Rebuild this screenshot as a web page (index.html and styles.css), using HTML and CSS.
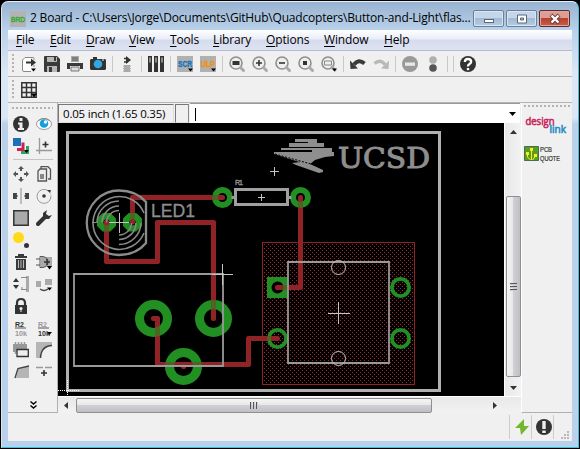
FILE: index.html
```html
<!DOCTYPE html>
<html lang="en">
<head>
<meta charset="utf-8">
<title>2 Board</title>
<link rel="stylesheet" href="styles.css">
</head>
<body>
<div class="window">
  <header class="titlebar">
    <svg class="app-icon" width="16" height="16"><rect width="16" height="16" fill="#b3b3b3"/><text x="1" y="11" class="px" font-size="8" fill="#39a935" stroke="#39a935" stroke-width=".5" textLength="14" lengthAdjust="spacingAndGlyphs">BRD</text></svg>
    <h1 class="title">2 Board - C:\Users\Jorge\Documents\GitHub\Quadcopters\Button-and-Light\flas...</h1>
    <div class="controls">
      <button class="ctl"><svg width="12" height="10"><rect x="1.500" y="5.500" width="9" height="3" fill="#fff" stroke="#5b6678"/></svg></button>
      <button class="ctl"><svg width="12" height="10"><path d="M1.500 1h9v8h-9z" fill="#fff" stroke="#5b6678"/><path d="M4.500 4h3v2h-3z" fill="#a9c0dc" stroke="#5b6678"/></svg></button>
      <button class="ctl close"><svg width="12" height="10"><path d="M2 1l8 8M10 1l-8 8" stroke="#6b3a3a" stroke-width="4"/><path d="M2.500 1.500l7 7M9.500 1.500l-7 7" stroke="#fff" stroke-width="2.400"/></svg></button>
    </div>
  </header>

  <div class="client">
    <nav class="menu">
      <span><u>F</u>ile</span><span><u>E</u>dit</span><span><u>D</u>raw</span><span><u>V</u>iew</span><span><u>T</u>ools</span><span><u>L</u>ibrary</span><span><u>O</u>ptions</span><span><u>W</u>indow</span><span><u>H</u>elp</span>
    </nav>

    <div class="toolbar">
      <i class="grip"></i>
      <b><svg viewBox="0 0 16 16"><path d="M13 4V2.500Q13 1.500 12 1.500H4L1.500 4v10q0 1.500 1.500 1.500h7M13 9v2" fill="#fff" stroke="#888"/><path d="M5 6.500h8" stroke="#333" stroke-width="2"/><path d="M10 2.500l5 4-5 4z" fill="#333"/><path d="M10 12.500h5l-2.500 3z"/></svg></b>
      <b><svg viewBox="0 0 16 16"><path d="M0 1q0-1 1-1h12l3 3v12q0 1-1 1H1q-1 0-1-1z" fill="#3a3a3a"/><path d="M3 1h10v5H3zM3 10h10v6H3z" fill="#b8b8b8"/><path d="M10 1h2v4h-2zM5 11h3v5H5z" fill="#3a3a3a"/></svg></b>
      <b><svg viewBox="0 0 16 16"><path d="M4 0h8v6H4z" fill="#aaa"/><path d="M5 2h6M5 4h6" stroke="#555"/><path d="M0 7h16v6h-3v-3H3v3H0z" fill="#3a3a3a"/><path d="M4 11h8v4H4z" fill="#ddd" stroke="#777"/></svg></b>
      <b><svg viewBox="0 0 16 16"><path d="M1 3h2V1h4v2h8l1 1v9l-1 1H1l-1-1V4z" fill="#333"/><circle cx="8" cy="8" r="4.300" fill="#32a8e0"/><path d="M12 4h2" stroke="#eee"/></svg></b>
      <s></s>
      <b><svg viewBox="0 0 16 16"><path d="M5 2.500h4M5 6h4" stroke="#333" stroke-width="1.500"/><path d="M7 0l5 4-5 4z" fill="#333"/><path d="M5 9h6v7H5z" fill="#aaa"/><path d="M4 10h8M4 12.500h8M4 15h8" stroke="#aaa"/></svg></b>
      <s></s>
      <b><svg viewBox="0 0 16 16"><path d="M0 0h4v16H0zM6 0h4v16H6zM12 0h4v16h-4z" fill="#333"/><path d="M1.500 1.500h1v5h-1zM7.500 1.500h1v5h-1zM13.500 1.500h1v5h-1z" fill="#ddd"/></svg></b>
      <s></s>
      <b><svg viewBox="0 0 16 16"><path d="M0 0h16v16H0z" fill="#b0b0b0"/><text class="px" x="1" y="11" font-size="8.500" fill="#1675b8" stroke="#1675b8" stroke-width=".4" textLength="14" lengthAdjust="spacingAndGlyphs">SCR</text><path d="M11 12.500h5l-2.500 3z"/></svg></b>
      <b><svg viewBox="0 0 16 16"><path d="M0 0h16v16H0z" fill="#b0b0b0"/><text class="px" x="1" y="11" font-size="8.500" fill="#ef9310" stroke="#ef9310" stroke-width=".4" textLength="14" lengthAdjust="spacingAndGlyphs">ULP</text><path d="M11 12.500h5l-2.500 3z"/></svg></b>
      <s></s>
      <b><svg viewBox="0 0 16 16"><circle cx="7" cy="7" r="6" class="lens"/><path d="M11.500 11.500l3 3" class="handle"/><path d="M3.500 5h7v4h-7z" fill="#333"/></svg></b>
      <b><svg viewBox="0 0 16 16"><circle cx="7" cy="7" r="6" class="lens"/><path d="M11.500 11.500l3 3" class="handle"/><path d="M4 7h6M7 4v6" stroke="#333" stroke-width="1.600"/></svg></b>
      <b><svg viewBox="0 0 16 16"><circle cx="7" cy="7" r="6" class="lens"/><path d="M11.500 11.500l3 3" class="handle"/><path d="M4 7h6" stroke="#333" stroke-width="1.600"/></svg></b>
      <b><svg viewBox="0 0 16 16"><circle cx="7" cy="7" r="6" class="lens"/><path d="M11.500 11.500l3 3" class="handle"/><path d="M5 5h4v4H5z" fill="#333"/></svg></b>
      <b><svg viewBox="0 0 16 16"><circle cx="7" cy="7" r="6" class="lens"/><path d="M11 11l3 3" class="handle"/><path d="M3.500 5h7v4h-7z" fill="none" stroke="#888"/><path d="M11 12.500h5l-2.500 3z"/></svg></b>
      <s></s>
      <b><svg viewBox="0 0 16 16"><path d="M4 8.500Q8.500 2.500 14.500 7.500" fill="none" stroke="#3a3a3a" stroke-width="4"/><path d="M0 4.500l8 8-7.500.5z" fill="#3a3a3a"/></svg></b>
      <b><svg viewBox="0 0 16 16"><path d="M12 8.500Q7.500 2.500 1.500 7.500" fill="none" stroke="#b8b8b8" stroke-width="3.500"/><path d="M16 4.500l-8 8 7.500.5z" fill="#b8b8b8"/></svg></b>
      <s></s>
      <b><svg viewBox="0 0 16 16"><circle cx="8" cy="8" r="8" fill="#999"/><path d="M3 6.500h10v3.300H3z" fill="#e8e8e8"/></svg></b>
      <b><svg viewBox="0 0 16 16"><circle cx="8" cy="4" r="3.800" fill="#b0b0b0"/><circle cx="8" cy="12" r="3.800" fill="#555"/></svg></b>
      <s></s><s></s>
      <b><svg viewBox="0 0 16 16"><circle cx="8" cy="8" r="8" fill="#333"/><path d="M4.800 6Q5 3 8 3t3.200 2.600Q11.200 7 9.500 8T8 10.500" fill="none" stroke="#fff" stroke-width="2.300"/><path d="M6.800 12h2.400v2.200H6.800z" fill="#fff"/></svg></b>
    </div>

    <div class="toolbar">
      <i class="grip"></i>
      <b><svg viewBox="0 0 16 16"><path d="M.8.8h14.400v14.400H.8zM5.500 0v16M10.500 0v16M0 5.500h16M0 10.500h16" fill="none" stroke="#333" stroke-width="1.500"/><path d="M10 11.500h6l-3 4z"/></svg></b>
    </div>

    <main class="work">
      <aside class="tools">
        <i class="hgrip"></i>
        <div class="palette">
          <b><svg viewBox="0 0 16 16"><circle cx="8" cy="8" r="8" fill="#333"/><path d="M6.500 2h3v3h-3zM5 6.500h4.500V12H11v2H5v-2h1.500V8.500H5z" fill="#eee"/></svg></b>
          <b><svg viewBox="0 0 16 16"><ellipse cx="8" cy="8" rx="7.500" ry="5.500" fill="#fff" stroke="#999"/><path d="M2 5q6-5 12 0" fill="none" stroke="#888"/><circle cx="8" cy="7.500" r="4.300" fill="#129fe2"/><circle cx="9.500" cy="6" r="1.700" fill="#fff"/></svg></b>
          <b><svg viewBox="0 0 16 16"><path d="M0 0h8v8H0z" fill="#1d70b7"/><path d="M10 4.500v7H4" fill="none" stroke="#d81a55" stroke-width="3"/><path d="M14.500 8v6.500H8" fill="none" stroke="#2ba562" stroke-width="3"/><path d="M11 12h5l-2.500 3z"/></svg></b>
          <b><svg viewBox="0 0 16 16"><path d="M3.500 0v16M0 12.500h16" stroke="#999" stroke-width="1.300"/><path d="M6.500 6.500h6M9.500 3.500v6" stroke="#333" stroke-width="1.600"/></svg></b>
        </div>
        <hr>
        <div class="palette">
          <b><svg viewBox="0 0 16 16"><path d="M8 0l3 3H9v2H7V3H5zM8 16l3-3H9v-2H7v2H5zM0 8l3-3v2h2v2H3v2zM16 8l-3-3v2h-2v2h2v2z" fill="#555"/></svg></b>
          <b><svg viewBox="0 0 16 16"><path d="M5 3V.7h7l2.500 2.500V13H12" fill="#eee" stroke="#555" stroke-width="1.300"/><path d="M2 5l2-2h6.500v12H2z" fill="#eee" stroke="#555" stroke-width="1.300"/><path d="M4 8h4v5H4z" fill="#888"/></svg></b>
          <b><svg viewBox="0 0 16 16"><path d="M8 0v16" stroke="#888"/><path d="M0 5h4v1.500H3v3h1V11H0zM16 5h-4v1.500h1v3h-1V11h4z" fill="#444"/><path d="M3 6l2 2-2 2zM13 6l-2 2 2 2z" fill="#444"/></svg></b>
          <b><svg viewBox="0 0 16 16"><path d="M12.500 3A7 7 0 1 0 15 8" fill="none" stroke="#999"/><path d="M13 3A7 7 0 0 1 15 8" fill="none" stroke="#ccc"/><circle cx="8" cy="8" r="1.800" fill="#333"/><path d="M11 2h4l-1 3z" fill="#333"/></svg></b>
          <b><svg viewBox="0 0 16 16"><path d="M.8.8h14.400v14.400H.8z" fill="#aaa" stroke="#333" stroke-width="1.500"/></svg></b>
          <b><svg viewBox="0 0 16 16"><path d="M2 14l7-7" stroke="#333" stroke-width="4" stroke-linecap="round"/><path d="M11 0l-4 3v4l2 2h4l3-4-3 1-3-2z" fill="#333"/></svg></b>
          <b><svg viewBox="0 0 16 16"><circle cx="5.500" cy="5.500" r="5.500" fill="#ffda16"/><circle cx="13.500" cy="13.500" r="2.500" fill="#333"/></svg></b>
          <b></b>
          <b><svg viewBox="0 0 16 16"><path d="M2 2h3V0h6v2h3v2H2zM3 5h10v11H3z" fill="#3a3a3a"/><path d="M5.500 6v8M8 6v8M10.500 6v8" stroke="#bbb"/></svg></b>
          <b><svg viewBox="0 0 16 16"><path d="M5 3h11v10H5z" fill="#aaa"/><path d="M4 2.500h3q5 1 5 5.500t-5 5.500H4zM0 5h4M0 11h4" fill="none" stroke="#555"/><path d="M8 8h6M11 5v6" stroke="#333" stroke-width="1.500"/><path d="M11 12h5l-2.500 3.500z"/></svg></b>
          <b><svg viewBox="0 0 16 16"><path d="M3 2l3 4H0zM3 13L0 9h6z" fill="#333"/><path d="M13 0h3v16h-3z" fill="#aaa"/><path d="M8 1.500h6M8 13.500h6M9 13V11" stroke="#888" fill="none"/></svg></b>
          <b><svg viewBox="0 0 16 16"><path d="M0 5h5v6H0zM9 3h7v6H9z" fill="#aaa"/><path d="M4 13q4 3 8 0" fill="none" stroke="#444" stroke-width="1.400"/><path d="M11 11.500h5l-2.500 3z"/></svg></b>
          <b><svg viewBox="0 0 16 16"><path d="M4 8V5q0-4 4-4t4 4v3" fill="none" stroke="#333" stroke-width="2.200"/><path d="M2 7h12v9H2z" fill="#333"/><circle cx="8" cy="10.500" r="1.500" fill="#eee"/><path d="M8 11v3" stroke="#eee"/></svg></b>
          <b></b>
          <b><svg viewBox="0 0 16 16"><text class="px" x="2" y="6.500" font-size="8" fill="#333" textLength="9" lengthAdjust="spacingAndGlyphs">R2</text><path d="M2 8h11" stroke="#555"/><text class="px" x="2" y="16" font-size="8" fill="#999" textLength="12" lengthAdjust="spacingAndGlyphs">10k</text></svg></b>
          <b><svg viewBox="0 0 16 16"><text class="px" x="2" y="6.500" font-size="8" fill="#999" textLength="9" lengthAdjust="spacingAndGlyphs">R2</text><path d="M2 8h11" stroke="#555"/><text class="px" x="2" y="16" font-size="8" fill="#333" textLength="12" lengthAdjust="spacingAndGlyphs">10k</text><path d="M11 12h5l-2.500 3z"/></svg></b>
          <b><svg viewBox="0 0 16 16"><path d="M0 2h14v8H0z" fill="#999"/><path d="M2.500 0v12M5.500 0v12M8.500 0v12M11.500 0v12" stroke="#999" stroke-width="1.500"/><path d="M4 7.500h11.300v7H4z" fill="#eee" stroke="#333" stroke-width="1.300"/></svg></b>
          <b><svg viewBox="0 0 16 16"><path d="M0 0h16v3Q5 4 4 16H0z" fill="#b5b5b5"/><path d="M4.500 16Q5 4 16 3.500" fill="none" stroke="#444" stroke-width="1.500"/></svg></b>
          <b><svg viewBox="0 0 16 16"><path d="M3 14L5.500 5 16 2v12z" fill="#b5b5b5"/><path d="M2 14L5 4.500 16 2" fill="none" stroke="#444" stroke-width="1.400"/></svg></b>
          <b><svg viewBox="0 0 16 16"><path d="M0 3.500h7M9 3.500h7" stroke="#999" stroke-width="1.300"/><path d="M5 9h6M8 6v6" stroke="#333" stroke-width="1.600"/></svg></b>
        </div>
        <svg class="more" width="7" height="8" viewBox="0 0 7 8"><path d="M.5.500l3 2.500 3-2.500M.5 4.500l3 2.500 3-2.500" fill="none" stroke="#000" stroke-width="1.400"/></svg>
      </aside>

      <section class="center">
        <div class="cmdline">
          <div class="coords">0.05 inch (1.65 0.35)</div>
          <div class="mini"></div>
          <div class="entry"><i class="caret"></i><svg width="8" height="4"><path d="M0 0h7l-3.500 4z"/></svg></div>
        </div>
        <div class="view">
          <svg class="board" viewBox="58 123 446 273" width="446" height="273">
            <defs>
              <pattern id="hatch" width="4" height="4" patternUnits="userSpaceOnUse"><path d="M0 0h1v1H0zM2 2h1v1H2z" fill="#a4282b" shape-rendering="crispEdges"/></pattern>
              <g id="traces" fill="none" stroke="#8f2426" stroke-width="5" stroke-linecap="round" stroke-linejoin="round">
                <path d="M132.500 222V197.500H222.500M106.500 222V261.500H157.500V222.500H213.500V318.500M300.500 197.500V287.500H277.500M153.500 318.500H157.500V364.500H248.500V338.500H277.500M183.500 366.500h.1"/>
              </g>
            </defs>
            <rect x="58" y="123" width="446" height="273" fill="#000"/>
            <rect x="262.500" y="242.500" width="152" height="142" fill="url(#hatch)" stroke="#8f2426"/>
            <circle cx="277.500" cy="287.500" r="6" fill="#000"/>
            <use href="#traces"/>
            <g fill="none" stroke="#228f22">
              <path d="M102.700 213.500h7.600l5.200 5v7.500l-5.200 5h-7.600l-5.200-5v-7.500zM106.500 218.700a3.600 3.600 0 1 0 .1 0z" fill="#228f22" fill-rule="evenodd" stroke-width="1"/>
              <path d="M128.700 213.500h7.600l5.200 5v7.500l-5.200 5h-7.600l-5.200-5v-7.500zM132.500 218.700a3.600 3.600 0 1 0 .1 0z" fill="#228f22" fill-rule="evenodd" stroke-width="1"/>
              <circle cx="222.500" cy="197.500" r="7.500" stroke-width="6"/>
              <circle cx="300.500" cy="197.500" r="7.500" stroke-width="6"/>
              <circle cx="153.500" cy="318.500" r="14" stroke-width="9"/>
              <circle cx="213.500" cy="318.500" r="14" stroke-width="9"/>
              <circle cx="183.500" cy="366.500" r="14" stroke-width="9"/>
              <path d="M267 277h21v21h-21zM277.500 281.500a6 6 0 1 0 .1 0z" fill="#228f22" fill-rule="evenodd" stroke="none"/>
              <circle cx="277.500" cy="338.500" r="8.600" stroke-width="3.800"/>
              <circle cx="400.500" cy="287.500" r="8.600" stroke-width="3.800"/>
              <circle cx="400.500" cy="338.500" r="8.600" stroke-width="3.800"/>
            </g>
            <use href="#traces" opacity=".4"/>
            <rect x="67.500" y="132.500" width="372" height="258" fill="none" stroke="#b0b0b0" stroke-width="3"/>
            <g fill="none" stroke="#999" stroke-width="1.800">
              <path d="M74 274h149v92H74zM288 262h101v101H288z"/>
              <path d="M235.500 189.500h52v15h-52z" stroke="#a0a0a0" stroke-width="3"/>
              <path d="M231.500 197.500h3M288.500 197.500h3" stroke-width="3"/>
              <path d="M146 202Q136 190.500 119 190.500A32 32 0 0 0 119 255Q136 255 146 243Z" stroke="#8c8c8c" stroke-width="2.300"/>
              <path d="M144 213A26.500 26.500 0 0 0 93 222.500A26.500 26.500 0 0 0 144 233" stroke="#8a8a8a" stroke-width="1.600"/>
              <path d="M119 201a22 22 0 0 0-22 21.500M119 206a17 17 0 0 0-17 16.500M119 210.500a12.500 12.500 0 0 0-12.500 12M119 244.500a22 22 0 0 0 22-21.500M119 239.500a17 17 0 0 0 17-16.500M119 235a12.500 12.500 0 0 0 12.500-12" stroke="#888" stroke-width="1.600"/>
            </g>
            <g fill="none" stroke="#c4c4c4" shape-rendering="crispEdges">
              <path d="M109 222.500h20M119.500 213v20M258 197.500h7M261.500 194v7M270 171.500h9M274.500 167v9M212 274.500h21M222.500 264v21M328 313.500h22M338.500 302v22"/>
              <path d="M92 222.500h5" stroke="#888"/>
              <path d="M58 390.500h21M67.500 380v16" stroke="#fff" stroke-dasharray="1 1"/>
            </g>
            <g fill="none" stroke="#c4c4c4"><circle cx="338.500" cy="267.500" r="7"/><circle cx="338.500" cy="358.500" r="7"/></g>
            <g fill="#8e8e8e">
              <path d="M295 139h22v4h7v4h-35v-4h19v-1h-13zM281 148h51v4h2v4l-9 1-10 3-6 5-35-11v-2h38v-2h-31zM292 163l8-1 10 2 13 6v2l-4 1-23-8z"/>
              <path d="M275 154l36 10" stroke="#000" stroke-dasharray="2 1.500"/>
              <text class="logo-text" x="338" y="167.500" font-size="28" stroke="#8e8e8e" stroke-width="1" textLength="92" lengthAdjust="spacingAndGlyphs">UCSD</text>
              <text class="silk" x="151" y="217" font-size="18" stroke="#8e8e8e" stroke-width=".3" textLength="44" lengthAdjust="spacingAndGlyphs">LED1</text>
              <text class="silk" x="235" y="185" font-size="7" stroke="#8e8e8e" stroke-width=".4" textLength="8">R1</text>
            </g>
          </svg>
          <div class="vscroll">
            <svg width="7" height="4"><path d="M0 4h7L3.500 0z" fill="#333"/></svg>
            <div class="vthumb"><i></i><i></i><i></i></div>
            <svg width="7" height="4"><path d="M0 0h7L3.500 4z" fill="#333"/></svg>
          </div>
        </div>
        <div class="hscroll">
          <svg width="4" height="7"><path d="M4 0v7L0 3.500z" fill="#333"/></svg>
          <div class="hthumb"><i></i><i></i><i></i></div>
          <svg width="4" height="7"><path d="M0 0v7l4-3.500z" fill="#333"/></svg>
        </div>
      </section>

      <aside class="side">
        <i class="hgrip"></i>
        <svg class="dlink" width="42" height="20" viewBox="525 115 42 20"><text x="525.500" y="125" font-size="11" fill="#c8265c" stroke="#c8265c" stroke-width=".6" textLength="29" lengthAdjust="spacingAndGlyphs">design</text><text x="549.500" y="133" font-size="10" fill="#258fc4" stroke="#258fc4" stroke-width=".6" textLength="16.500" lengthAdjust="spacingAndGlyphs">link</text></svg>
        <div class="quote">
          <svg width="15" height="15"><path d="M.5.500h14v14H.5z" fill="#5a9d20" stroke="#4a6a5a"/><path d="M3.500 8v3l3 3M7.500 4v10M11.500 10l-3 4" fill="none" stroke="#f5ee20"/><path d="M2 6h3v3H2zM6 2h3v3H6zM10 8h3v3h-3z" fill="#f5ee20"/></svg>
          <svg width="20" height="16"><text class="px" x="0" y="6" font-size="7" fill="#333" stroke="#333" stroke-width=".2" textLength="12" lengthAdjust="spacingAndGlyphs">PCB</text><text class="px" x="0" y="15" font-size="7" fill="#333" stroke="#333" stroke-width=".2" textLength="20" lengthAdjust="spacingAndGlyphs">QUOTE</text></svg>
        </div>
      </aside>
    </main>

    <footer class="status">
      <div class="cell"><svg width="16" height="16"><path d="M10 0L1 9h5l1 7 8-9h-5z" fill="#72b82a"/></svg></div>
      <div class="cell"><svg width="16" height="16"><circle cx="8" cy="8" r="8" fill="#333"/><path d="M6.300 2h3.400v8H6.300zM6.300 11.500h3.400v2.500H6.300z" fill="#eee"/></svg></div>
      <div class="cell end"><svg width="8" height="8"><path d="M6 0h2v2H6zM3 3h2v2H3zM6 3h2v2H6zM0 6h2v2H0zM3 6h2v2H3zM6 6h2v2H6z" fill="#b8b8b8"/></svg></div>
    </footer>
  </div>
</div>
</body>
</html>
```
FILE: styles.css
```css
* { box-sizing: border-box; }
body {
  margin: 0;
  padding: 1px;
  width: 580px;
  height: 449px;
  background: #000;
  overflow: hidden;
  font: 12px "Open Sans", "Noto Sans", sans-serif;
  color: #000;
}
svg { display: block; flex: none; overflow: visible; }
.board { overflow: hidden; }
.window {
  height: 447px;
  padding: 0 6px 6px;
  border: 1px solid #35c3e0;
  border-top-color: #e4eef8;
  border-left-color: #d8e6f4;
  border-radius: 7px 7px 0 0;
  background: linear-gradient(#98b3d1 0, #b9d1ea 28px, #d9e7f6 70px, #d9e7f6 116px, #b9d1ea 122px);
}
.titlebar { height: 28px; display: flex; align-items: center; padding: 4px 2px 0 2px; }
.app-icon { margin-top: 1px; }
.title { flex: none; margin: 0 0 0 4px; width: 443px; font-size: 12px; font-weight: 400; line-height: 18px; white-space: nowrap; letter-spacing: -.2px; }
.controls { display: flex; gap: 2px; margin-top: 1px; }
.ctl {
  width: 31px; height: 17px; padding: 0;
  display: flex; align-items: center; justify-content: center;
  border: 1px solid #6d7e96; border-radius: 2px;
  box-shadow: inset 0 0 0 1px #d9e6f4;
  background: linear-gradient(#c4d6ea 50%, #a2bad6 50%, #b6cce4);
}
.close {
  border-color: #5d2b2b;
  box-shadow: inset 0 0 0 1px #e0a8a0;
  background: linear-gradient(#dc9e92 50%, #b8412c 50%, #c85f48);
}
.client { height: 411px; background: #f0f0f0; }
.menu {
  height: 21px; padding-left: 8px;
  display: grid; grid-template-columns: 34px 36px 43px 41px 43px 53px 58px 60px 40px;
  border-bottom: 1px solid #b6bccc;
  background: linear-gradient(#fff, #e9edf7 45%, #d6dcee 50%, #dde3f2);
  line-height: 20px; letter-spacing: -.15px;
}
.menu u { text-underline-offset: 2px; text-decoration-thickness: 1px; }
.toolbar { height: 26px; display: flex; align-items: center; border-bottom: 1px solid #b4b4b4; padding-left: 4px; }
.toolbar b, .palette b { width: 23px; height: 22px; display: flex; align-items: center; justify-content: center; }
.toolbar svg, .palette svg { width: 16px; height: 16px; }
.toolbar s { width: 6px; height: 16px; background: linear-gradient(#c8c8c8, #c8c8c8) 3px 0 / 1px 100% no-repeat; }
.grip { width: 2px; height: 20px; margin-right: 3px; background: repeating-linear-gradient(#b4b4b4 0 2px, transparent 2px 4px); }
.hgrip { display: block; height: 2px; background: repeating-linear-gradient(90deg, #b4b4b4 0 2px, transparent 2px 4px); }
.lens { fill: #eee; stroke: #909090; stroke-width: 1.6; }
.handle { stroke: #aaa; stroke-width: 3; stroke-linecap: round; }
.px { font-family: "Liberation Sans", sans-serif; }
.work { height: 310px; display: grid; grid-template-columns: 50px 463px 51px; }
.tools { padding: 4px 2px 0 1px; border-right: 1px solid #b0b0b0; border-bottom: 1px solid #b0b0b0; }
.tools .hgrip { margin: 0 2px 4px 3px; }
.palette { display: grid; grid-template-columns: 23px 23px; grid-auto-rows: 22px; }
.tools hr { height: 1px; margin: 2px 2px 3px 4px; border: 0; background: #c4c4c4; }
.more { margin: 18px 0 0 21px; }
.cmdline { height: 20px; display: flex; background: #f0f0f0; }
.coords, .mini { height: 19px; margin-top: 1px; border: 1px solid #777; border-right-color: #ddd; border-bottom-color: #ddd; }
.coords { width: 116px; padding-left: 4px; font-size: 11.5px; line-height: 17px; white-space: nowrap; letter-spacing: -.2px; }
.mini { width: 14px; margin-left: 1px; border-right-color: #888; }
.entry { flex: 1; margin: 0 1px 0 1px; display: flex; align-items: center; justify-content: space-between; padding: 1px 3px 0 5px; background: #fff; border-top: 1px solid #999; }
.caret { width: 1px; height: 13px; background: #000; }
.view { display: flex; }
.vscroll { width: 17px; height: 273px; padding: 7px 0 6px 1px; border-left: 1px solid #fff; display: flex; flex-direction: column; align-items: center; background: linear-gradient(90deg, #e8e8e8, #f2f2f2); }
.vthumb { width: 15px; height: 182px; margin: 62px 0 9px; display: flex; flex-direction: column; align-items: center; justify-content: center; gap: 1px; border: 1px solid #8f8f8f; border-radius: 2px; background: linear-gradient(90deg, #f5f5f5, #e8e8ea 45%, #d0d0d4 50%, #c0c0c4); }
.vthumb i { width: 7px; height: 2px; background: #555; border-bottom: 1px solid #ccc; }
.hscroll { height: 17px; padding: 1px 7px 0 6px; border-top: 1px solid #fff; display: flex; align-items: center; background: linear-gradient(#e8e8e8, #f2f2f2); }
.hthumb { width: 356px; height: 15px; margin: 0 61px 0 8px; display: flex; align-items: center; justify-content: center; gap: 1px; border: 1px solid #8f8f8f; border-radius: 2px; background: linear-gradient(#f5f5f5, #e8e8ea 45%, #d0d0d4 50%, #c0c0c4); }
.hthumb i { width: 2px; height: 7px; background: #555; border-right: 1px solid #ccc; }
.side { padding: 2px 2px 0; border-left: 1px solid #fff; border-bottom: 1px solid #b0b0b0; }
.dlink { margin: 8px 0 0 1px; font-family: "Open Sans", sans-serif; }
.quote { display: flex; gap: 1px; margin-top: 11px; }
.logo-text { font-family: "DejaVu Serif", serif; }
.silk { font-family: "Liberation Sans", sans-serif; }
.status { height: 28px; padding-top: 2px; display: flex; justify-content: flex-end; }
.cell { width: 22px; height: 24px; display: flex; align-items: center; justify-content: center; padding-left: 3px; border-left: 1px solid #ccc; }
.end { width: 19px; align-items: flex-end; }
```
